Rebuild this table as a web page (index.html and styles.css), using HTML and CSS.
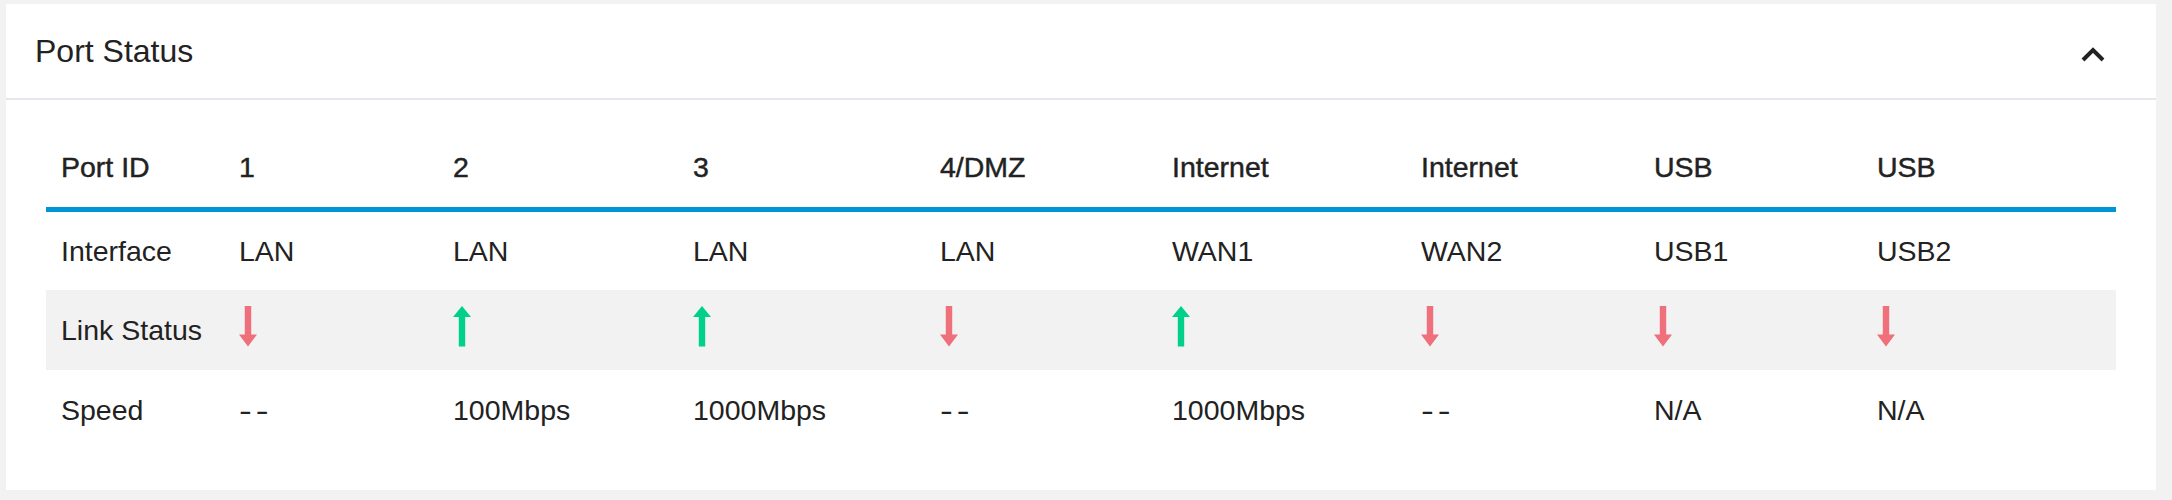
FILE: index.html
```html
<!DOCTYPE html>
<html lang="en">
<head>
<meta charset="utf-8">
<title>Port Status</title>
<link rel="stylesheet" href="styles.css">
</head>
<body>
<section class="card">
  <header class="card-header">
    <h2 class="card-title">Port Status</h2>
    <button class="collapse-btn" aria-label="Collapse">
      <svg width="24" height="16" viewBox="0 0 24 16"><polyline points="2,14 12,4 22,14" fill="none" stroke="#222" stroke-width="4" stroke-linejoin="miter"/></svg>
    </button>
  </header>
  <div class="card-body">
    <table class="port-table">
      <colgroup>
        <col class="c0"><col class="c1"><col class="c2"><col class="c3"><col class="c4"><col class="c5"><col class="c6"><col class="c7"><col class="c8">
      </colgroup>
      <thead>
        <tr>
          <th>Port ID</th><th>1</th><th>2</th><th>3</th><th>4/DMZ</th><th>Internet</th><th>Internet</th><th>USB</th><th>USB</th>
        </tr>
      </thead>
      <tbody>
        <tr class="row-interface">
          <td>Interface</td><td>LAN</td><td>LAN</td><td>LAN</td><td>LAN</td><td>WAN1</td><td>WAN2</td><td>USB1</td><td>USB2</td>
        </tr>
        <tr class="row-link">
          <td>Link Status</td>
          <td><svg class="arrow down" viewBox="0 0 18 41" width="18" height="41"><path d="M5.8 0h6.4v28.5H18L9 40.5 0 28.5h5.8z"/></svg></td>
          <td><svg class="arrow up" viewBox="0 0 18 41" width="18" height="41"><path d="M9 0l9 11h-5.8v29.5H5.8V11H0z"/></svg></td>
          <td><svg class="arrow up" viewBox="0 0 18 41" width="18" height="41"><path d="M9 0l9 11h-5.8v29.5H5.8V11H0z"/></svg></td>
          <td><svg class="arrow down" viewBox="0 0 18 41" width="18" height="41"><path d="M5.8 0h6.4v28.5H18L9 40.5 0 28.5h5.8z"/></svg></td>
          <td><svg class="arrow up" viewBox="0 0 18 41" width="18" height="41"><path d="M9 0l9 11h-5.8v29.5H5.8V11H0z"/></svg></td>
          <td><svg class="arrow down" viewBox="0 0 18 41" width="18" height="41"><path d="M5.8 0h6.4v28.5H18L9 40.5 0 28.5h5.8z"/></svg></td>
          <td><svg class="arrow down" viewBox="0 0 18 41" width="18" height="41"><path d="M5.8 0h6.4v28.5H18L9 40.5 0 28.5h5.8z"/></svg></td>
          <td><svg class="arrow down" viewBox="0 0 18 41" width="18" height="41"><path d="M5.8 0h6.4v28.5H18L9 40.5 0 28.5h5.8z"/></svg></td>
        </tr>
        <tr class="row-speed">
          <td>Speed</td><td><span class="dashes">--</span></td><td>100Mbps</td><td>1000Mbps</td><td><span class="dashes">--</span></td><td>1000Mbps</td><td><span class="dashes">--</span></td><td>N/A</td><td>N/A</td>
        </tr>
      </tbody>
    </table>
  </div>
</section>
</body>
</html>
```

FILE: styles.css
```css
* { box-sizing: border-box; }

html, body {
  margin: 0;
  padding: 0;
  background: #f2f2f2;
  font-family: "Liberation Sans", Arial, sans-serif;
  color: #222;
}

body {
  padding: 4px 16px 10px 6px;
}

.card {
  background: #fff;
  width: 2150px;
}

.card-header {
  display: flex;
  align-items: center;
  justify-content: space-between;
  height: 96px;
  padding: 0 51px 0 29px;
  border-bottom: 2px solid #e4e8ec;
}

.card-title {
  margin: 0;
  font-size: 32px;
  font-weight: normal;
  color: #222;
}

.collapse-btn {
  border: 0;
  background: none;
  padding: 0;
  margin-top: 5px;
  display: flex;
  cursor: pointer;
}

.card-body {
  padding: 27px 40px 40px 40px;
}

.port-table {
  width: 2070px;
  table-layout: fixed;
  border-collapse: separate;
  border-spacing: 0;
  font-size: 28.5px;
}

.c0 { width: 178px; }
.c1 { width: 214px; }
.c2 { width: 240px; }
.c3 { width: 247px; }
.c4 { width: 232px; }
.c5 { width: 249px; }
.c6 { width: 233px; }
.c7 { width: 223px; }
.c8 { width: 254px; }

.port-table th,
.port-table td {
  padding: 0 15px;
  text-align: left;
  vertical-align: middle;
  white-space: nowrap;
}

.port-table th {
  height: 85px;
  font-weight: normal;
  -webkit-text-stroke: 0.45px #222;
  border-bottom: 5px solid #0096d6;
}

.row-interface td { height: 78px; }
.row-link td { height: 80px; background: #f2f2f2; }
.row-speed td { height: 80px; }

.dashes {
  display: inline-block;
  letter-spacing: 3px;
  transform: scaleX(1.35);
  transform-origin: left center;
}

.arrow {
  display: block;
  margin-bottom: 7px;
}

.arrow.down { fill: #ef6f7b; }
.arrow.up { fill: #00d08a; }
```
